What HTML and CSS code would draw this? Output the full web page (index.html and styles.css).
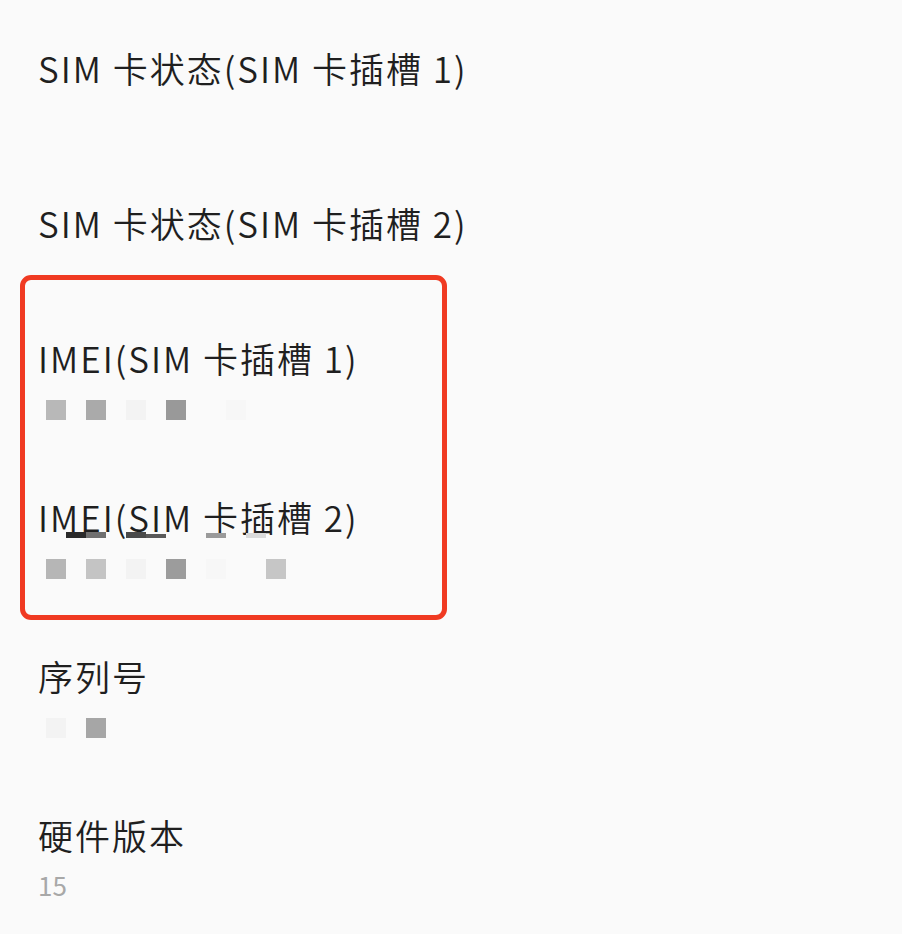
FILE: index.html
```html
<!DOCTYPE html>
<html lang="zh-CN">
<head>
<meta charset="utf-8">
<title>关于手机</title>
<link rel="stylesheet" href="styles.css">
</head>
<body>
<div class="page">
  <div class="item item-tall">
    <div class="title">SIM 卡状态(SIM 卡插槽 1)</div>
  </div>
  <div class="item item-mid">
    <div class="title">SIM 卡状态(SIM 卡插槽 2)</div>
  </div>
  <div class="item">
    <div class="title">IMEI(SIM 卡插槽 1)</div>
    <div class="sub mosaic">
      <span class="sq g1"></span><span class="sq g2"></span><span class="sq g3"></span><span class="sq g4"></span><span class="sq g5 off"></span>
    </div>
  </div>
  <div class="item">
    <div class="title">IMEI(SIM 卡插槽 2)
      <span class="strip">
        <span class="bar b1"></span><span class="bar b2"></span><span class="bar b3"></span><span class="bar b4"></span><span class="bar b5"></span><span class="bar b6"></span>
      </span>
    </div>
    <div class="sub mosaic">
      <span class="sq g6"></span><span class="sq g7"></span><span class="sq g3"></span><span class="sq g8"></span><span class="sq g5"></span><span class="sq g9 off"></span>
    </div>
  </div>
  <div class="item">
    <div class="title">序列号</div>
    <div class="sub mosaic">
      <span class="sq g3"></span><span class="sq g10"></span>
    </div>
  </div>
  <div class="item">
    <div class="title">硬件版本</div>
    <div class="sub value">15</div>
  </div>
  <div class="highlight"></div>
</div>
</body>
</html>
```

FILE: styles.css
```css
html, body {
  margin: 0;
  padding: 0;
  background: #fafafa;
}

body {
  font-family: "Noto Sans CJK SC", "Noto Sans", sans-serif;
  color: #1f1f1f;
}

.page {
  position: relative;
  height: 934px;
  box-sizing: border-box;
  padding: 10px 0 0 38px;
  overflow: hidden;
}

.item {
  padding: 35px 0 34px;
}

.item-tall {
  padding-bottom: 74px;
}

.item-mid {
  padding-bottom: 54px;
}

.title {
  position: relative;
  font-size: 35px;
  font-weight: 350;
  letter-spacing: 2px;
  line-height: 46px;
  white-space: nowrap;
}

.sub {
  margin-top: 10px;
  height: 34px;
}

.mosaic {
  display: flex;
  gap: 20px;
  padding: 9px 0 0 8px;
  box-sizing: border-box;
}

.sq {
  display: block;
  width: 20px;
  height: 20px;
  flex: none;
}

.sq.off {
  margin-left: 20px;
}

.g1 { background: #b8b8b8; }
.g2 { background: #aaaaaa; }
.g3 { background: #f3f3f3; }
.g4 { background: #999999; }
.g5 { background: #f7f7f7; }
.g6 { background: #b6b6b6; }
.g7 { background: #c4c4c4; }
.g8 { background: #9c9c9c; }
.g9 { background: #c6c6c6; }
.g10 { background: #a6a6a6; }

.value {
  font-size: 26px;
  line-height: 34px;
  color: #a8a8a8;
}

.strip {
  position: absolute;
  left: 0;
  top: 38px;
  width: 240px;
  height: 8px;
}

.bar {
  position: absolute;
  top: 0;
  height: 6px;
}

.b1 { left: 28px; width: 20px; background: #2a2a2a; }
.b2 { left: 48px; width: 20px; background: #707070; }
.b3 { left: 88px; width: 20px; background: #4a4a4a; }
.b4 { left: 108px; width: 20px; top: 2px; height: 4px; background: #5a5a5a; }
.b5 { left: 168px; width: 20px; top: 1px; height: 5px; background: #9a9a9a; }
.b6 { left: 208px; width: 20px; top: 1px; height: 5px; background: #dadada; }

.highlight {
  position: absolute;
  left: 20px;
  top: 275px;
  width: 427px;
  height: 345px;
  box-sizing: border-box;
  border: 5px solid #f03a22;
  border-radius: 11px;
}
```
